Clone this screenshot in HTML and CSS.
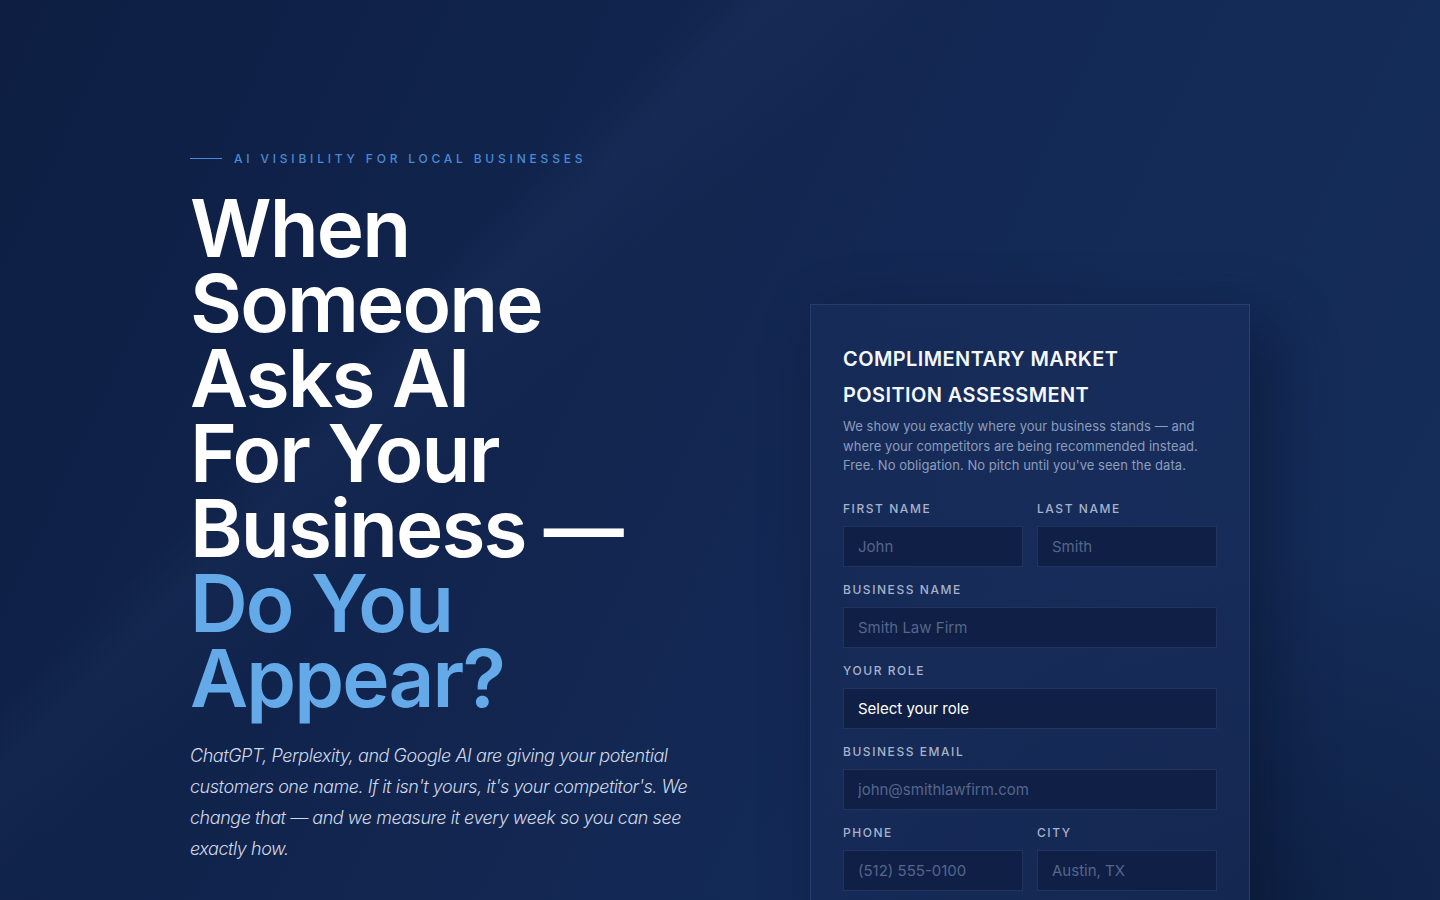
FILE: index.html
```html
<!DOCTYPE html>
<html lang="en">
<head>
<meta charset="utf-8">
<title>AI Visibility for Local Businesses</title>
<link rel="stylesheet" href="styles.css">
</head>
<body>
<main class="hero">
  <section class="intro">
    <div class="eyebrow"><span class="eyebrow-line"></span><span>AI Visibility for Local Businesses</span></div>
    <h1 class="headline">When<br>Someone<br>Asks AI<br>For Your<br>Business —<br><span class="accent">Do You<br>Appear?</span></h1>
    <p class="lede">ChatGPT, Perplexity, and Google AI are giving your potential customers one name. If it isn't yours, it's your competitor's. We change that — and we measure it every week so you can see exactly how.</p>
  </section>
  <aside class="card">
    <h2 class="card-title">Complimentary Market Position Assessment</h2>
    <p class="card-desc">We show you exactly where your business stands — and where your competitors are being recommended instead. Free. No obligation. No pitch until you've seen the data.</p>
    <form class="form">
      <div class="row">
        <label class="field"><span class="label">First Name</span><input class="input" type="text" placeholder="John"></label>
        <label class="field"><span class="label">Last Name</span><input class="input" type="text" placeholder="Smith"></label>
      </div>
      <label class="field"><span class="label">Business Name</span><input class="input" type="text" placeholder="Smith Law Firm"></label>
      <label class="field"><span class="label">Your Role</span>
        <select class="input select"><option>Select your role</option><option>Owner</option><option>Partner</option><option>Manager</option></select>
      </label>
      <label class="field"><span class="label">Business Email</span><input class="input" type="email" placeholder="john@smithlawfirm.com"></label>
      <div class="row">
        <label class="field"><span class="label">Phone</span><input class="input" type="tel" placeholder="(512) 555-0100"></label>
        <label class="field"><span class="label">City</span><input class="input" type="text" placeholder="Austin, TX"></label>
      </div>
    </form>
  </aside>
</main>
</body>
</html>
```

FILE: styles.css
```css
* { box-sizing: border-box; }
html, body { margin: 0; padding: 0; height: 100%; }
body {
  background: linear-gradient(115deg, #0d1e42 0%, #11244d 35%, #142b58 70%, #152d59 100%);
  color: #fff;
  font-family: Inter, "Liberation Sans", sans-serif;
  overflow: hidden;
}
.hero {
  position: relative;
  height: 900px;
  display: flex;
  justify-content: space-between;
  padding: 151px 190px 0 190px;
  background:
    radial-gradient(ellipse 700px 500px at 1300px 900px, rgba(8, 22, 50, 0.45), transparent 70%),
    linear-gradient(135deg, transparent 0%, transparent 30%, rgba(120, 160, 230, 0.04) 33%, transparent 40%);
}
.intro { width: 520px; display: flex; flex-direction: column; }
.eyebrow {
  display: flex; align-items: center; gap: 12px;
  font-family: Inter, sans-serif;
  font-size: 12px; font-weight: 500;
  letter-spacing: 3.8px; text-transform: uppercase;
  color: #4a8ad6;
  height: 14px;
}
.eyebrow-line { width: 32px; height: 1px; background: #4a8ad6; }
.headline {
  margin: 25px 0 0 0;
  font-family: Inter, sans-serif;
  font-size: 80px; font-weight: 600;
  line-height: 75px;
  letter-spacing: -1.9px;
  color: #ffffff;
}
.accent { color: #64a9e8; }
.lede {
  margin: 25px 0 0 0;
  width: 510px;
  font-family: Inter, sans-serif;
  font-style: italic; font-weight: 300;
  font-size: 18px; line-height: 31px;
  letter-spacing: -0.45px;
  color: #d0d8e8;
}
.card {
  margin-top: 153px;
  width: 440px;
  align-self: flex-start;
  height: 640px;
  padding: 36px 32px 0 32px;
  border: 1px solid rgba(140, 170, 220, 0.16);
  background: linear-gradient(180deg, rgba(25, 46, 92, 0.55), rgba(22, 42, 86, 0.55));
  box-shadow: 20px 20px 60px rgba(5, 14, 35, 0.45);
}
.card-title {
  margin: 0;
  max-width: 320px;
  font-family: Inter, sans-serif;
  font-size: 20px; font-weight: 600;
  line-height: 36px;
  letter-spacing: 0.4px;
  text-transform: uppercase;
  color: #f4f7fc;
}
.card-desc {
  margin: 4px 0 0 0;
  font-size: 13px; line-height: 19.5px;
  color: #8d9dbb;
  letter-spacing: 0.05px;
}
.form { margin-top: 26px; display: flex; flex-direction: column; gap: 16px; }
.row { display: flex; gap: 14px; }
.row .field { flex: 1; }
.field { display: flex; flex-direction: column; gap: 10px; }
.label {
  font-size: 12px; font-weight: 500;
  letter-spacing: 1.55px; text-transform: uppercase;
  color: #a6b3cb; line-height: 14px;
}
.input {
  height: 41px; width: 100%;
  padding: 0 14px;
  background: #0f1f46;
  border: 1px solid rgba(120, 150, 200, 0.18);
  color: #ffffff;
  font-family: Inter, sans-serif;
  font-size: 15px;
  outline: none;
  border-radius: 0;
}
.input::placeholder { color: #55668a; }
.select { appearance: none; -webkit-appearance: none; color: #ffffff; }
```
